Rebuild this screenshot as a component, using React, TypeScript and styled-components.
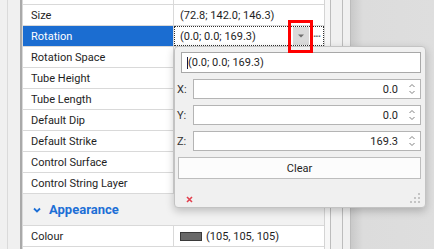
import React from 'react';
import styled, { createGlobalStyle } from 'styled-components';

const GlobalStyle = createGlobalStyle`
    html, body {
        margin: 0;
        padding: 0;
        background: #f0f0f0;
    }
    body {
        font-family: Roboto, "Liberation Sans", Arial, sans-serif;
        font-size: 11px;
        color: #1e1e1e;
    }
`;

const properties = [
    { name: '', value: '' },
    { name: 'Size', value: '(72.8; 142.0; 146.3)' },
    { name: 'Rotation', value: '(0.0; 0.0; 169.3)', selected: true },
    { name: 'Rotation Space', value: '' },
    { name: 'Tube Height', value: '' },
    { name: 'Tube Length', value: '' },
    { name: 'Default Dip', value: '' },
    { name: 'Default Strike', value: '' },
    { name: 'Control Surface', value: '' },
    { name: 'Control String Layer', value: '' },
];

const axes = [
    { label: 'X:', value: '0.0' },
    { label: 'Y:', value: '0.0' },
    { label: 'Z:', value: '169.3' },
];

// resize grip dots, bottom-right triangle
const gripDots = [
    [8, 0],
    [4, 4],
    [8, 4],
    [0, 8],
    [4, 8],
    [8, 8],
];

const App: React.FC = () => {
    return (
        <>
            <GlobalStyle />
            <Screen>
                <Gutter />
                <Grid>
                    {properties.map((p, i) => (
                        <Row key={i} first={i === 0}>
                            <LabelCell selected={!!p.selected}>{p.name}</LabelCell>
                            <ValueCell focused={!!p.selected}>
                                <ValueText>{p.value}</ValueText>
                                {p.selected && (
                                    <>
                                        <DropButton>
                                            <svg width="6" height="4" viewBox="0 0 6 4">
                                                <path d="M0 0.5 L6 0.5 L3 3.5 Z" fill="#6f6f6f" />
                                            </svg>
                                        </DropButton>
                                        <Ellipsis>···</Ellipsis>
                                    </>
                                )}
                            </ValueCell>
                        </Row>
                    ))}
                    <CategoryRow>
                        <svg width="8" height="6" viewBox="0 0 8 6">
                            <polyline points="1,1.5 4,4.5 7,1.5" fill="none" stroke="#1d6fd6" strokeWidth="1.8" />
                        </svg>
                        <CategoryTitle>Appearance</CategoryTitle>
                    </CategoryRow>
                    <Row>
                        <LabelCell>Colour</LabelCell>
                        <ValueCell>
                            <Swatch colour="rgb(105, 105, 105)" />
                            <ValueText>(105, 105, 105)</ValueText>
                        </ValueCell>
                    </Row>
                    <Row />
                </Grid>
                <Rail>
                    <RailBand width={5} light />
                    <RailBand width={12} />
                    <RailBand width={8} />
                </Rail>
                <Backdrop />

                <Popup>
                    <TextField>
                        <Caret />
                        (0.0; 0.0; 169.3)
                    </TextField>
                    {axes.map(a => (
                        <AxisRow key={a.label}>
                            <AxisLabel>{a.label}</AxisLabel>
                            <SpinField>
                                <SpinValue>{a.value}</SpinValue>
                                <svg width="6" height="14" viewBox="0 0 6 14">
                                    <path d="M0.5 5 L3 2.5 L5.5 5" fill="none" stroke="#808080" strokeWidth="1" />
                                    <path d="M0.5 9 L3 11.5 L5.5 9" fill="none" stroke="#808080" strokeWidth="1" />
                                </svg>
                            </SpinField>
                        </AxisRow>
                    ))}
                    <ClearButton>Clear</ClearButton>
                    <Footer>
                        <svg width="7" height="7" viewBox="0 0 7 7">
                            <path d="M1 1 L6 6 M6 1 L1 6" stroke="#e2404e" strokeWidth="1.6" />
                        </svg>
                        <svg width="10" height="10" viewBox="0 0 10 10">
                            {gripDots.map(([x, y]) => (
                                <rect key={`${x}-${y}`} x={x} y={y} width="2" height="2" fill="#c4c4c4" />
                            ))}
                        </svg>
                    </Footer>
                </Popup>
                <Highlight />
            </Screen>
        </>
    );
};

const Screen = styled.div`
    position: relative;
    display: flex;
    width: 434px;
    height: 249px;
    overflow: hidden;
    background: #f0f0f0;
`;

const Gutter = styled.div`
    width: 20px;
    flex-shrink: 0;
    background: linear-gradient(to right, #f0f0f0 0 7px, #dadada 7px 8px, #f0f0f0 8px);
`;

const Grid = styled.div`
    width: 301px;
    flex-shrink: 0;
    display: flex;
    flex-direction: column;
    background: #ffffff;
    border-left: 2px solid #a9a9a9;
    border-right: 1px solid #d4d4d4;
    box-shadow: inset 1px 0 0 #d9d9d9;
    padding-left: 1px;
    box-sizing: content-box;
`;

const Row = styled.div<{ first?: boolean }>`
    display: flex;
    flex-shrink: 0;
    height: ${props => (props.first ? 4 : 20)}px;
    border-bottom: 1px solid #d9d9d9;
`;

const LabelCell = styled.div<{ selected?: boolean }>`
    width: 142px;
    flex-shrink: 0;
    display: flex;
    align-items: center;
    padding-left: 8px;
    border-right: 1px solid #d9d9d9;
    background: ${props => (props.selected ? '#1b6dd1' : 'transparent')};
    color: ${props => (props.selected ? '#ffffff' : '#1e1e1e')};
    white-space: nowrap;
`;

const ValueCell = styled.div<{ focused?: boolean }>`
    flex: 1;
    display: flex;
    align-items: center;
    padding-left: 6px;
    outline: ${props => (props.focused ? '1px dotted #303030' : 'none')};
    outline-offset: -1px;
    white-space: nowrap;
`;

const ValueText = styled.span`
    flex: 1;
`;

const DropButton = styled.div`
    width: 16px;
    height: 18px;
    display: flex;
    align-items: center;
    justify-content: center;
    background: #dadada;
`;

const Ellipsis = styled.span`
    width: 15px;
    text-align: center;
    color: #6a6a6a;
    font-weight: bold;
    letter-spacing: -1px;
`;

const CategoryRow = styled.div`
    height: 31px;
    flex-shrink: 0;
    display: flex;
    align-items: center;
    gap: 8px;
    padding-left: 10px;
    background: #f2f2f2;
    border-bottom: 1px solid #d9d9d9;
`;

const CategoryTitle = styled.span`
    font-size: 13px;
    font-weight: bold;
    color: #1d6fd6;
`;

const Swatch = styled.span<{ colour: string }>`
    width: 20px;
    height: 7px;
    margin-right: 4px;
    border: 1px solid #3a3a3a;
    background: ${props => props.colour};
`;

const Rail = styled.div`
    display: flex;
    width: 26px;
    flex-shrink: 0;
`;

const RailBand = styled.div<{ width: number; light?: boolean }>`
    width: ${props => props.width}px;
    background: ${props => (props.light ? '#f7f7f7' : '#f0f0f0')};
    border-right: 1px solid #bcbcbc;
`;

const Backdrop = styled.div`
    flex: 1;
    background: linear-gradient(to right, #c9c9c9, #dcdcdc 12px, #dedede);
`;

const Popup = styled.div`
    position: absolute;
    left: 174px;
    top: 46px;
    width: 240px;
    height: 155px;
    padding: 5px 4px 0 6px;
    display: flex;
    flex-direction: column;
    gap: 6px;
    background: #f0f0f0;
    border: 1px solid #c3c3c3;
    border-radius: 4px;
    box-shadow: 0 3px 9px rgba(0, 0, 0, 0.22);
`;

const TextField = styled.div`
    height: 19px;
    display: flex;
    align-items: center;
    padding-left: 5px;
    background: #ffffff;
    border: 1px solid #a8a8a8;
    flex-shrink: 0;
`;

const Caret = styled.span`
    width: 1px;
    height: 12px;
    background: #1a1a40;
`;

const AxisRow = styled.div`
    display: flex;
    align-items: center;
    height: 20px;
    margin-left: -4px;
`;

const AxisLabel = styled.span`
    width: 16px;
    color: #333333;
`;

const SpinField = styled.div`
    flex: 1;
    height: 18px;
    display: flex;
    align-items: center;
    gap: 11px;
    padding-right: 5px;
    background: #ffffff;
    border: 1px solid #b4b4b4;
`;

const SpinValue = styled.span`
    flex: 1;
    text-align: right;
`;

const ClearButton = styled.div`
    height: 20px;
    margin-left: -3px;
    display: flex;
    align-items: center;
    justify-content: center;
    background: #fcfcfc;
    border: 1px solid #bdbdbd;
`;

const Footer = styled.div`
    flex: 1;
    display: flex;
    align-items: flex-end;
    justify-content: space-between;
    padding: 0 1px 4px 5px;
`;

const Highlight = styled.div`
    position: absolute;
    left: 288px;
    top: 20px;
    width: 19px;
    height: 27px;
    border: 3px solid #ff0000;
`;

export default App;
